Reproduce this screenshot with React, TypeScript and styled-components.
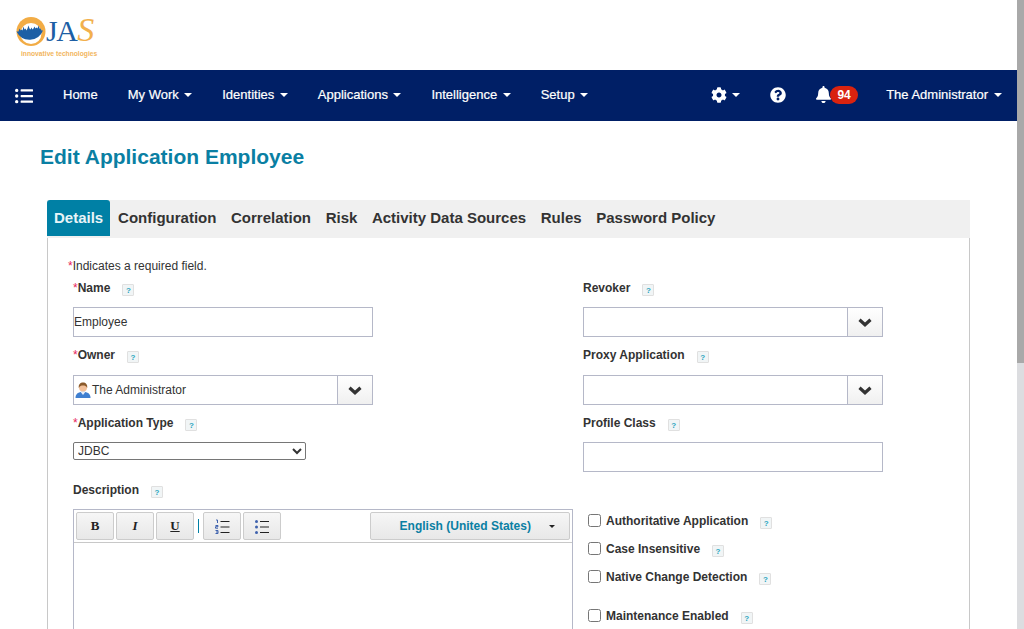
import React from "react";
import styled, { createGlobalStyle } from "styled-components";
import { FaBell, FaCog, FaListUl, FaQuestionCircle } from "react-icons/fa";

const GlobalStyle = createGlobalStyle`
  html, body {
    margin: 0;
    padding: 0;
    height: 100%;
    overflow: hidden;
    background: #fff;
  }
  body {
    font-family: "Liberation Sans", Arial, sans-serif;
    font-size: 12px;
    color: #333;
  }
  * {
    box-sizing: border-box;
  }
`;

const Page = styled.div`
  display: flex;
  width: 1024px;
  height: 629px;
  overflow: hidden;
`;

const Main = styled.div`
  width: 1017px;
  flex: none;
`;

const ScrollTrack = styled.div`
  flex: 1;
  background: #dcdde0;
`;

const ScrollThumb = styled.div`
  height: 363px;
  background: #a9a9a9;
`;

const LogoBar = styled.div`
  height: 70px;
  padding: 16px 0 0 16px;
`;

const LogoRow = styled.div`
  display: flex;
  align-items: flex-start;
  height: 34px;
`;

const LogoLetters = styled.div`
  font-family: "Liberation Serif", serif;
  font-size: 30px;
  line-height: 28px;
  letter-spacing: -1.5px;
  color: #1d5fa5;

  span {
    color: #f2b04d;
    font-size: 34px;
    line-height: 28px;
    font-style: italic;
    margin-left: 1px;
  }
`;

const LogoTag = styled.div`
  margin: 0 0 0 5px;
  font-size: 6.7px;
  line-height: 8px;
  font-weight: 700;
  color: #f2b65e;
  white-space: nowrap;
`;

const NavBar = styled.nav`
  display: flex;
  align-items: center;
  height: 51px;
  padding: 0 0 2px 15px;
  background: #001f66;
  color: #fff;
`;

const MenuToggle = styled.span`
  display: flex;
  font-size: 18px;
  margin: 2px 30px 0 0;
`;

const NavItem = styled.a`
  display: flex;
  align-items: center;
  margin-right: 30px;
  font-size: 13px;
  line-height: 16px;
  white-space: nowrap;
  -webkit-text-stroke: 0.2px #fff;

  &:last-child {
    margin-right: 15.5px;
  }
`;

const Caret = styled.i<{ $color?: string; $size?: number }>`
  display: inline-block;
  margin-left: 5.5px;
  width: 0;
  height: 0;
  border-left: ${(p) => p.$size ?? 4}px solid transparent;
  border-right: ${(p) => p.$size ?? 4}px solid transparent;
  border-top: ${(p) => p.$size ?? 4}px solid ${(p) => p.$color ?? "#fff"};
`;

const NavRight = styled.div`
  display: flex;
  align-items: center;
  margin-left: auto;
  height: 100%;
`;

const NavIcon = styled.span<{ $gap: number; $size?: number }>`
  display: flex;
  align-items: center;
  font-size: ${(p) => p.$size ?? 16}px;
  margin-right: ${(p) => p.$gap}px;
`;

const Badge = styled.span`
  margin-left: -2px;
  width: 28px;
  height: 18px;
  border-radius: 9px;
  background: #d9230f;
  color: #fff;
  font-size: 12px;
  font-weight: 700;
  line-height: 18px;
  text-align: center;
`;

const Content = styled.main`
  padding: 0 47px;
`;

const Title = styled.h1`
  margin: 0 0 0 -7px;
  padding: 24px 0 0 0;
  height: 79px;
  font-size: 21px;
  line-height: 24px;
  font-weight: 700;
  color: #0a7fa3;
`;

const TabStrip = styled.div`
  display: flex;
  width: 923px;
  height: 38px;
  padding-bottom: 2px;
  background: #f0f0f0;
`;

const Tab = styled.div<{ $active?: boolean }>`
  padding: ${(p) => (p.$active ? "0 7px" : "0 7.3px")};
  margin-right: ${(p) => (p.$active ? "0.6px" : "0")};
  font-size: 15px;
  line-height: 36px;
  font-weight: 700;
  white-space: nowrap;
  border-radius: ${(p) => (p.$active ? "3px 3px 0 0" : "0")};
  background: ${(p) => (p.$active ? "#0080a5" : "transparent")};
  color: ${(p) => (p.$active ? "#e8f4f8" : "#333")};
`;

const Panel = styled.div`
  width: 923px;
  height: 420px;
  padding: 20px 0 0 20px;
  border-left: 1px solid #c8c8c8;
  border-right: 1px solid #c8c8c8;
`;

const Note = styled.div`
  height: 20px;
  font-size: 12px;
  line-height: 16px;
`;

const Req = styled.span`
  color: #e8245c;
  font-weight: 400;
`;

const Columns = styled.div`
  display: grid;
  grid-template-columns: 510px 1fr;
  padding-left: 5px;
`;

const Field = styled.div`
  margin-bottom: 8px;
`;

const Label = styled.label`
  display: flex;
  align-items: center;
  height: 20px;
  margin-bottom: 10px;
  font-size: 12px;
  line-height: 20px;
  font-weight: 700;
  white-space: nowrap;
`;

const TightLabel = styled(Label)`
  margin-bottom: 9px;
`;

const Help = styled.span`
  display: inline-block;
  width: 12px;
  height: 12px;
  margin: 4px 0 0 12px;
  border: 1px solid #e0e0e0;
  border-radius: 1px;
  background: #f1f5f6;
  color: #2aa5c0;
  font-size: 8px;
  line-height: 11px;
  font-weight: 700;
  text-align: center;
`;

const TextInput = styled.input`
  display: block;
  width: 300px;
  height: 30px;
  padding: 0;
  border: 1px solid #b5b8c8;
  outline: none;
  background: #fff;
  color: #333;
  font-family: inherit;
  font-size: 12px;
`;

const Combo = styled.div`
  display: flex;
  width: 300px;
  height: 30px;
  border: 1px solid #b5b8c8;
  background: #fff;
`;

const ComboValue = styled.div`
  display: flex;
  align-items: center;
  flex: 1;
  gap: 1px;
  padding-left: 1px;
  font-size: 12px;
  color: #333;
`;

const ComboButton = styled.div`
  display: flex;
  align-items: center;
  justify-content: center;
  width: 35px;
  border-left: 1px solid #b5b8c8;
  background: linear-gradient(#fff, #f0f0f0);
  color: #333;
`;

const TypeSelect = styled.select`
  display: block;
  width: 233px;
  height: 18px;
  padding: 0;
  margin-bottom: 20px;
  border: 1px solid #767676;
  border-radius: 2px;
  background: #fff;
  color: #333;
  font-family: inherit;
  font-size: 12px;
`;

const BottomRow = styled.div`
  display: flex;
  padding-left: 5px;
`;

const Editor = styled.div`
  width: 500px;
  height: 200px;
  border: 1px solid #b5b8c8;
`;

const Toolbar = styled.div`
  display: flex;
  align-items: center;
  height: 33px;
  padding: 2px;
  border-bottom: 1px solid #c8c8c8;
`;

const ToolButton = styled.button`
  display: flex;
  align-items: center;
  justify-content: center;
  width: 38px;
  height: 28px;
  margin-right: 2px;
  padding: 0;
  border: 1px solid #ccc;
  border-radius: 2px;
  background: linear-gradient(#f6f6f6, #e8e8e8);
  color: #222;
  font-family: "Liberation Serif", serif;
  font-size: 13px;
`;

const ToolSeparator = styled.span`
  width: 1px;
  height: 14px;
  margin: 0 4px 0 2px;
  background: #0080a5;
`;

const LanguageButton = styled.button`
  display: flex;
  align-items: center;
  width: 200px;
  height: 28px;
  margin-left: auto;
  padding: 0 14px 0 16px;
  border: 1px solid #ccc;
  border-radius: 2px;
  background: linear-gradient(#f6f6f6, #e8e8e8);
  color: #0a7fa3;
  font-family: inherit;
  font-size: 12px;
  font-weight: 700;

  span {
    flex: 1;
  }
`;

const Checks = styled.div`
  margin: -2px 0 0 15px;
`;

const CheckRow = styled.label<{ $gap?: number }>`
  display: flex;
  align-items: center;
  height: 28px;
  margin-top: ${(p) => p.$gap ?? 0}px;
  font-size: 12px;
  font-weight: 700;
  white-space: nowrap;
`;

const CheckBox = styled.input`
  width: 13px;
  height: 13px;
  margin: -2px 5px 0 0;
`;

const ChevronIcon = () => (
  <svg width="14" height="9" viewBox="0 0 14 9">
    <path d="M1.500 1.800 7 6.800 12.500 1.800" fill="none" stroke="#333" strokeWidth="3.200" />
  </svg>
);

const OwnerIcon = () => (
  <svg width="16" height="16" viewBox="0 0 16 16">
    <path d="M.5 16c0-4 2.800-6.200 7.500-6.200s7.500 2.200 7.500 6.200z" fill="#3f7fd0" />
    <path d="M5.500 9.800h5L8 13z" fill="#e6eefa" />
    <circle cx="8" cy="5.500" r="4" fill="#f2c09a" />
    <path d="M3.800 6C3.300 2.400 5.300 0.500 8 0.500S12.700 2.400 12.200 6C11.300 4 9.700 3.600 8 3.600S4.700 4 3.800 6z" fill="#8a5a2b" />
  </svg>
);

const LogoMark = () => (
  <svg width="30" height="31" viewBox="0 0 30 31">
    <circle cx="15" cy="15.500" r="14.500" fill="#f2ac45" />
    <circle cx="15" cy="17.500" r="10.500" fill="#fff" />
    <path
      d="M.5 15.500h2l1-3 1 2 1-1 1 1 1-4 1 3 1-1 1 2 1-2 1-3 1 3 1 1 1-2 1 2 1-1 1-2 1 2 1-1 1 1 1-3 1 3 1 0 1 2h1.500A14.500 14.500 0 0 1 .5 15.500z"
      fill="#1d5fa5"
    />
  </svg>
);

const NumberedIcon = () => (
  <svg width="15" height="15" viewBox="0 0 15 15">
    <path d="M5.500 2.500h9M5.500 8h9M5.500 13.500h9" stroke="#222" strokeWidth="1" />
    <path d="M1 1h1.500v3M.5 6.500h2.500v1.200h-2.500v1.500h2.500M.5 11.500h2.500v3h-2.500M1 13h2" fill="none" stroke="#3f62ad" strokeWidth="1" />
  </svg>
);

const BulletIcon = () => (
  <svg width="14" height="15" viewBox="0 0 14 15">
    <path d="M5 2.500h9M5 8h9M5 13.500h9" stroke="#222" strokeWidth="1" />
    <circle cx="1.500" cy="2.500" r="1.500" fill="#3f62ad" />
    <circle cx="1.500" cy="8" r="1.500" fill="#3f62ad" />
    <circle cx="1.500" cy="13.500" r="1.500" fill="#3f62ad" />
  </svg>
);

const navItems = ["My Work", "Identities", "Applications", "Intelligence", "Setup"];
const tabs = ["Configuration", "Correlation", "Risk", "Activity Data Sources", "Rules", "Password Policy"];

const App: React.FC = () => {
  return (
    <Page>
      <GlobalStyle />
      <Main>
        <LogoBar>
          <LogoRow>
            <LogoMark />
            <LogoLetters>
              JA<span>S</span>
            </LogoLetters>
          </LogoRow>
          <LogoTag>innovative technologies</LogoTag>
        </LogoBar>

        <NavBar>
          <MenuToggle>
            <FaListUl />
          </MenuToggle>
          <NavItem>Home</NavItem>
          {navItems.map((item) => (
            <NavItem key={item}>
              {item}
              <Caret />
            </NavItem>
          ))}
          <NavRight>
            <NavIcon $gap={30}>
              <FaCog />
              <Caret />
            </NavIcon>
            <NavIcon $gap={29}>
              <FaQuestionCircle />
            </NavIcon>
            <NavIcon $gap={28} $size={17}>
              <FaBell />
              <Badge>94</Badge>
            </NavIcon>
            <NavItem>
              The Administrator
              <Caret />
            </NavItem>
          </NavRight>
        </NavBar>

        <Content>
          <Title>Edit Application Employee</Title>
          <TabStrip>
            <Tab $active>Details</Tab>
            {tabs.map((tab) => (
              <Tab key={tab}>{tab}</Tab>
            ))}
          </TabStrip>
          <Panel>
            <Note>
              <Req>*</Req>Indicates a required field.
            </Note>
            <Columns>
              <div>
                <Field>
                  <TightLabel>
                    <Req>*</Req>Name<Help>?</Help>
                  </TightLabel>
                  <TextInput defaultValue="Employee" />
                </Field>
                <Field>
                  <Label>
                    <Req>*</Req>Owner<Help>?</Help>
                  </Label>
                  <Combo>
                    <ComboValue>
                      <OwnerIcon />
                      The Administrator
                    </ComboValue>
                    <ComboButton>
                      <ChevronIcon />
                    </ComboButton>
                  </Combo>
                </Field>
                <TightLabel>
                  <Req>*</Req>Application Type<Help>?</Help>
                </TightLabel>
                <TypeSelect defaultValue="JDBC">
                  <option>JDBC</option>
                </TypeSelect>
                <TightLabel>
                  Description<Help>?</Help>
                </TightLabel>
              </div>
              <div>
                <Field>
                  <TightLabel>
                    Revoker<Help>?</Help>
                  </TightLabel>
                  <Combo>
                    <ComboValue />
                    <ComboButton>
                      <ChevronIcon />
                    </ComboButton>
                  </Combo>
                </Field>
                <Field>
                  <Label>
                    Proxy Application<Help>?</Help>
                  </Label>
                  <Combo>
                    <ComboValue />
                    <ComboButton>
                      <ChevronIcon />
                    </ComboButton>
                  </Combo>
                </Field>
                <TightLabel>
                  Profile Class<Help>?</Help>
                </TightLabel>
                <TextInput />
              </div>
            </Columns>
            <BottomRow>
              <Editor>
                <Toolbar>
                  <ToolButton>
                    <b>B</b>
                  </ToolButton>
                  <ToolButton>
                    <b>
                      <i>I</i>
                    </b>
                  </ToolButton>
                  <ToolButton>
                    <b>
                      <u>U</u>
                    </b>
                  </ToolButton>
                  <ToolSeparator />
                  <ToolButton>
                    <NumberedIcon />
                  </ToolButton>
                  <ToolButton>
                    <BulletIcon />
                  </ToolButton>
                  <LanguageButton>
                    <span>English (United States)</span>
                    <Caret $color="#222" $size={3} />
                  </LanguageButton>
                </Toolbar>
              </Editor>
              <Checks>
                <CheckRow>
                  <CheckBox type="checkbox" />
                  Authoritative Application<Help>?</Help>
                </CheckRow>
                <CheckRow>
                  <CheckBox type="checkbox" />
                  Case Insensitive<Help>?</Help>
                </CheckRow>
                <CheckRow>
                  <CheckBox type="checkbox" />
                  Native Change Detection<Help>?</Help>
                </CheckRow>
                <CheckRow $gap={11}>
                  <CheckBox type="checkbox" />
                  Maintenance Enabled<Help>?</Help>
                </CheckRow>
              </Checks>
            </BottomRow>
          </Panel>
        </Content>
      </Main>
      <ScrollTrack>
        <ScrollThumb />
      </ScrollTrack>
    </Page>
  );
};

export default App;
